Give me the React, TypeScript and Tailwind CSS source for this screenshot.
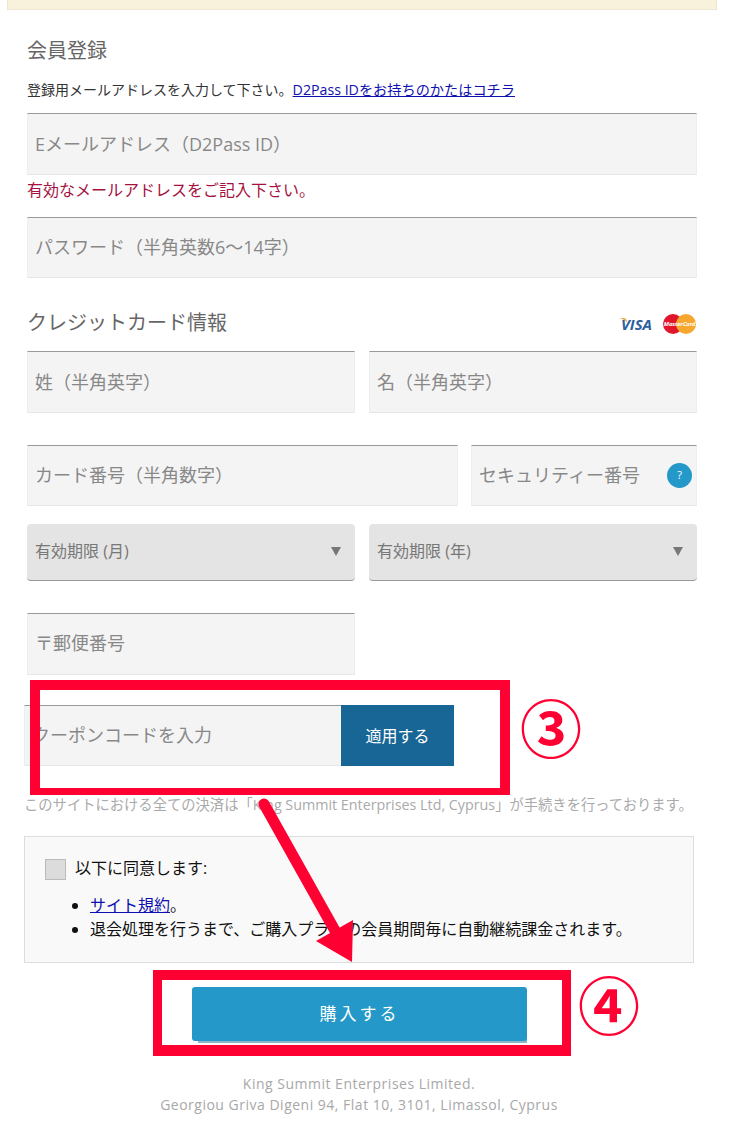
import React from 'react';

const FONT = 'font-["Open_Sans","Noto_Sans_CJK_JP",sans-serif]';

function Field({ label, className, children }: { label: string; className?: string; children?: React.ReactNode }) {
    return (
        <div
            className={`flex items-center justify-between bg-[#f4f4f4] border-t border-t-[#999] border-x border-b border-x-[#eee] border-b-[#e6e6e6] pl-[7px] text-[18px] text-[#888] ${className ?? ''}`}
        >
            <span>{label}</span>
            {children}
        </div>
    );
}

function SelectBox({ label }: { label: string }) {
    return (
        <div className="flex-1 flex items-center justify-between h-[57px] pb-[2px] bg-[#e4e4e4] rounded-[4px] border-b border-b-[#999] pl-[8px] pr-[14px] text-[16px] text-[#777]">
            <span>{label}</span>
            <span className="w-0 h-0 border-x-[5px] border-x-transparent border-t-[9px] border-t-[#777]" />
        </div>
    );
}

function CardLogos() {
    return (
        <div className="flex items-center gap-[11px] mt-[2px] mr-[1px]">
            <div className="relative">
                <span className="block text-[15px] leading-[16px] font-bold italic text-[#2b5f9e]">VISA</span>
                <svg className="absolute left-[-1px] top-[2px]" width="8" height="5" viewBox="0 0 8 5">
                    <path d="M0 0 H4 Q6.5 .5 7.5 4.5 Q5 1.5 0 0Z" fill="#e8a33d" />
                </svg>
            </div>
            <div className="relative w-[33px] h-[20px]">
                <span className="absolute left-0 top-0 w-[20px] h-[20px] rounded-full bg-[#e2162b]" />
                <span className="absolute right-0 top-0 w-[20px] h-[20px] rounded-full bg-[#f6a72e]" />
                <span className="absolute inset-0 flex items-center justify-center text-[6px] font-bold italic text-white tracking-[-0.2px]">MasterCard</span>
            </div>
        </div>
    );
}

function Annotations() {
    return (
        <>
            <div className="absolute left-[30px] top-[680px] w-[480px] h-[115px] border-[#ff0033] border-x-[10px] border-t-[10px] border-b-[7px]" />
            <div className="absolute left-[153px] top-[970px] w-[418px] h-[86px] border-[#ff0033] border-x-[9px] border-t-[10px] border-b-[11px]" />
            <svg className="absolute left-0 top-0 pointer-events-none" width="737" height="1122" viewBox="0 0 737 1122">
                <line x1="264" y1="804" x2="338" y2="936" stroke="#ff0033" strokeWidth="11" strokeLinecap="round" />
                <path d="M352 962 L316 941 L353 920 Z" fill="#ff0033" />
            </svg>
            <span className="absolute left-[517px] top-[684px] w-[68px] text-center text-[62px] leading-[90px] font-bold text-[#ff0033]">③</span>
            <span className="absolute left-[575px] top-[961px] w-[68px] text-center text-[62px] leading-[90px] font-bold text-[#ff0033]">④</span>
        </>
    );
}

export default function App() {
    return (
        <div className={`relative w-[737px] h-[1122px] overflow-hidden bg-white ${FONT}`}>
            <div className="ml-[7px] mr-[20px] h-[10px] bg-[#f8f1dc] border-x border-b border-[#ece6d2]" />

            <div className="px-[27px] pr-[40px]">
                <h2 className="mt-[26px] h-[30px] leading-[30px] text-[20px] text-[#666]">会員登録</h2>
                <p className="mt-[14px] h-[20px] leading-[20px] text-[14px] text-[#333] whitespace-nowrap">
                    登録用メールアドレスを入力して下さい。
                    <a href="#" className="text-[14.2px] text-[#1010b0] underline">D2Pass IDをお持ちのかたはコチラ</a>
                </p>
                <Field label="Eメールアドレス（D2Pass ID）" className="mt-[13px] h-[62px]" />
                <p className="mt-[5px] h-[20px] leading-[20px] text-[16px] text-[#a5123f]">有効なメールアドレスをご記入下さい。</p>
                <Field label="パスワード（半角英数6～14字）" className="mt-[17px] h-[61px]" />

                <div className="mt-[30px] h-[30px] flex items-center justify-between">
                    <h2 className="leading-[30px] text-[20px] text-[#666]">クレジットカード情報</h2>
                    <CardLogos />
                </div>
                <div className="mt-[13px] flex gap-[14px]">
                    <Field label="姓（半角英字）" className="flex-1 h-[62px]" />
                    <Field label="名（半角英字）" className="flex-1 h-[62px]" />
                </div>
                <div className="mt-[32px] flex gap-[13px]">
                    <Field label="カード番号（半角数字）" className="w-[431px] h-[61px]" />
                    <Field label="セキュリティー番号" className="flex-1 h-[61px] pr-[4px]">
                        <span className="flex items-center justify-center w-[25px] h-[25px] rounded-full bg-[#2499c9] text-[11px] text-white">?</span>
                    </Field>
                </div>
                <div className="mt-[18px] flex gap-[14px]">
                    <SelectBox label="有効期限 (月)" />
                    <SelectBox label="有効期限 (年)" />
                </div>
                <Field label="〒郵便番号" className="mt-[32px] w-[328px] h-[62px] pb-[2px]" />

                <div className="mt-[30px] -ml-[3px] flex">
                    <Field label="クーポンコードを入力" className="w-[317px] h-[61px] border-r-0" />
                    <button className="w-[113px] h-[61px] bg-[#176696] text-[16px] text-white">適用する</button>
                </div>
                <p className="mt-[29px] -ml-[3px] h-[20px] leading-[20px] text-[14.3px] text-[#aaa] whitespace-nowrap">
                    このサイトにおける全ての決済は「King Summit Enterprises Ltd, Cyprus」が手続きを行っております。
                </p>

                <div className="mt-[21px] -ml-[3px] w-[670px] h-[127px] bg-[#f9f9f9] border border-[#ddd] pl-[20px] pt-[22px] text-[16px] text-[#111]">
                    <div className="flex items-center gap-[9px] h-[21px]">
                        <span className="w-[21px] h-[21px] bg-[#dcdcdc] border border-[#bbb]" />
                        <span className="pb-[3px]">以下に同意します:</span>
                    </div>
                    <ul className="mt-[13px] list-disc pl-[45px] leading-[24px]">
                        <li><a href="#" className="text-[#1010b0] underline">サイト規約</a>。</li>
                        <li className="whitespace-nowrap">退会処理を行うまで、ご購入プランの会員期間毎に自動継続課金されます。</li>
                    </ul>
                </div>

                <div className="mt-[24px] ml-[165px] w-[335px] h-[54px] rounded-[3px] bg-[#2499c9] shadow-[3px_5px_0_-3px_#8fb4c8] flex items-center justify-center text-[17px] tracking-[3px] text-white">
                    購入する
                </div>

                <div className="mt-[32px] -ml-[27px] -mr-[21px] text-center text-[14px] leading-[21px] tracking-[0.5px] text-[#a8a8a8]">
                    <p>King Summit Enterprises Limited.</p>
                    <p>Georgiou Griva Digeni 94, Flat 10, 3101, Limassol, Cyprus</p>
                </div>
            </div>

            <Annotations />
        </div>
    );
}
